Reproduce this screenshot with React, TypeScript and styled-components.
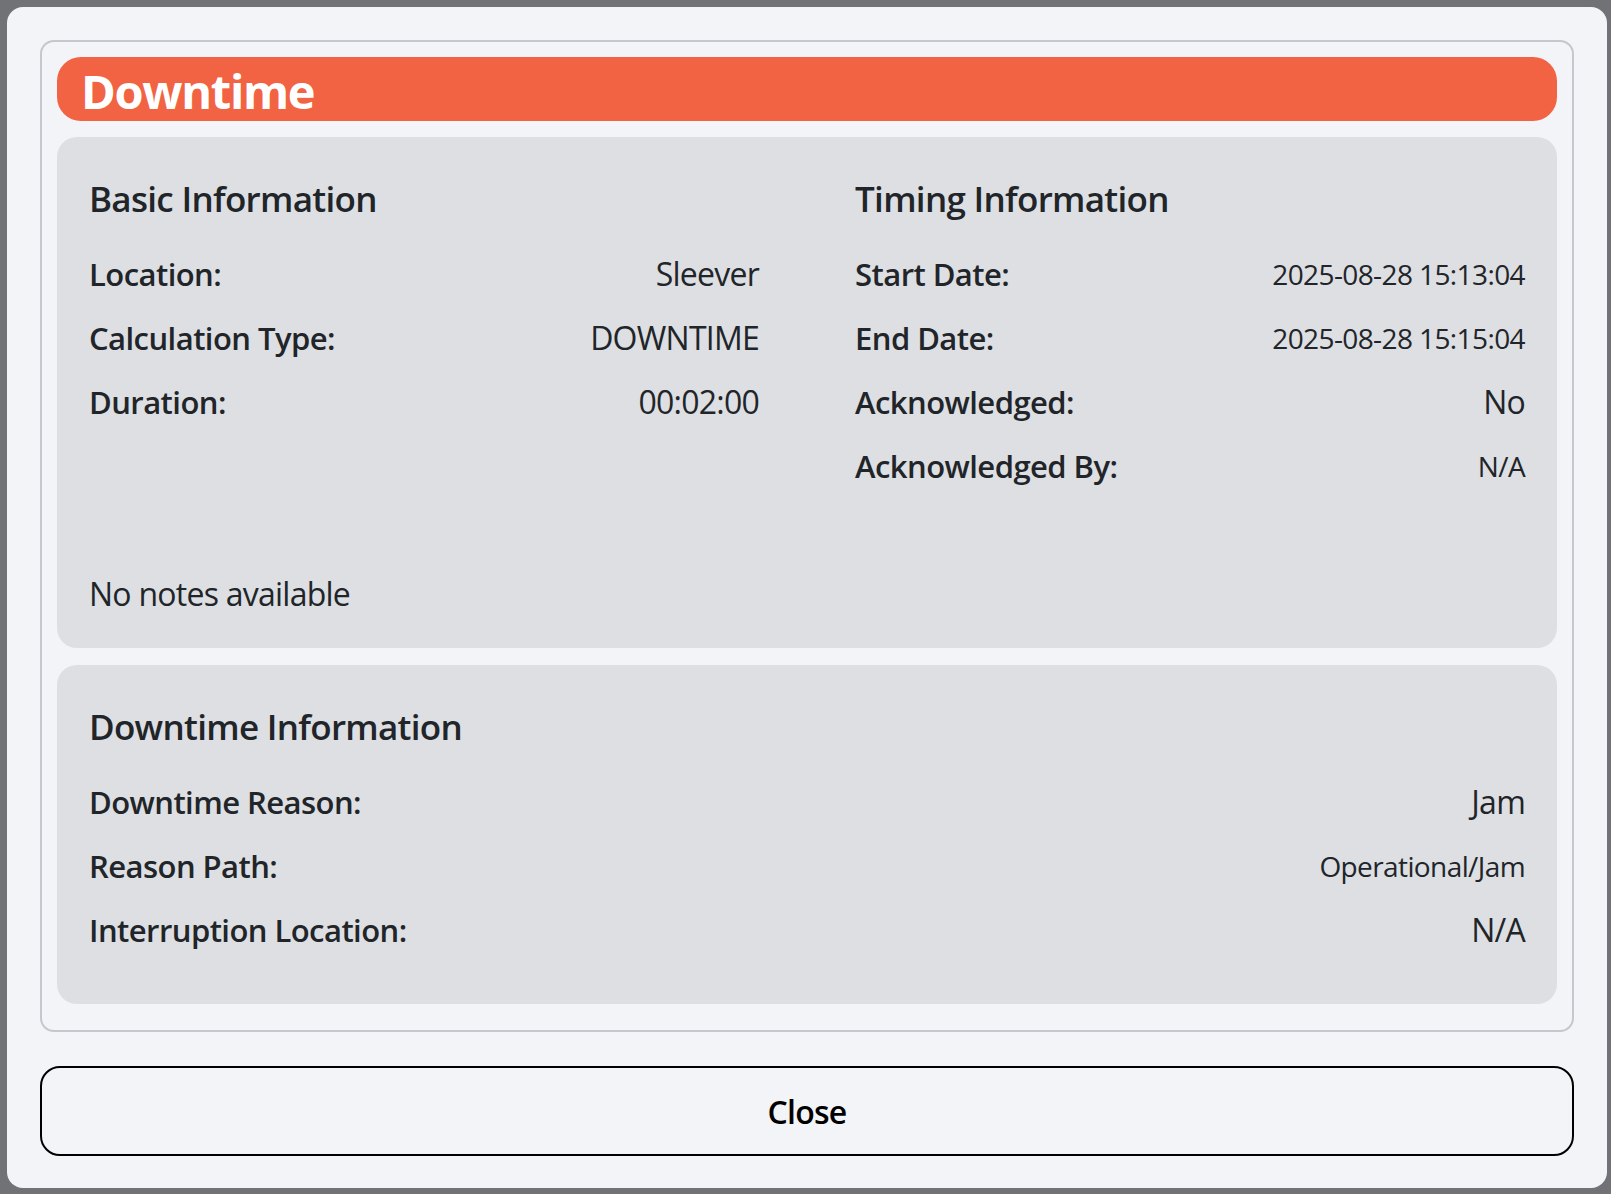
import React from "react";
import styled, { createGlobalStyle } from "styled-components";

const GlobalStyle = createGlobalStyle`
  html, body {
    margin: 0;
    padding: 0;
    background: #717276;
  }
  body {
    font-family: "Segoe UI", "Open Sans", "Noto Sans", sans-serif;
    color: #212529;
  }
  * { box-sizing: border-box; }
`;

const Overlay = styled.div`
  min-height: 1194px;
  padding: 7px 4px 6px 7px;
  background: #717276;
`;

const Modal = styled.div`
  width: 1600px;
  background: #f3f4f7;
  border-radius: 16px;
  padding: 33px 33px 32px;
  display: flex;
  flex-direction: column;
  gap: 34px;
`;

const Frame = styled.div`
  border: 2px solid #c3c8ce;
  border-radius: 14px;
  padding: 15px 15px 26px;
  display: flex;
  flex-direction: column;
  gap: 16px;
`;

const Banner = styled.div`
  height: 64px;
  background: #f16342;
  border-radius: 24px;
  padding: 4px 24px 0;
  display: flex;
  align-items: center;
`;

const BannerTitle = styled.h1`
  margin: 0;
  color: #ffffff;
  font-size: 47px;
  font-weight: 700;
  line-height: 60px;
  letter-spacing: -1.3px;
`;

const Card = styled.section<{ $gapBefore?: number }>`
  background: #dddfe3;
  border-radius: 20px;
  padding: 32px;
  margin-top: ${(p) => p.$gapBefore ?? 0}px;
`;

const Columns = styled.div`
  display: grid;
  grid-template-columns: 1fr 1fr;
  column-gap: 96px;
`;

const Column = styled.div`
  display: flex;
  flex-direction: column;
`;

const Heading = styled.h2`
  margin: 8px 0 29px;
  font-size: 35px;
  font-weight: 600;
  line-height: 44px;
  color: #212529;
  letter-spacing: -0.7px;
`;

const Rows = styled.div<{ $bottom?: number }>`
  display: flex;
  flex-direction: column;
  gap: 16px;
  margin-bottom: ${(p) => p.$bottom ?? 0}px;
`;

const Row = styled.div`
  display: flex;
  align-items: center;
  justify-content: space-between;
  height: 48px;
`;

const Label = styled.span`
  font-size: 31px;
  font-weight: 600;
  line-height: 48px;
  color: #212529;
  letter-spacing: -0.55px;
`;

const Value = styled.span<{ $small?: boolean }>`
  font-size: ${(p) => (p.$small ? 28 : 32)}px;
  font-weight: 400;
  line-height: 48px;
  color: #212529;
  text-align: right;
  letter-spacing: ${(p) => (p.$small ? -0.6 : -0.75)}px;
`;

const Notes = styled.p`
  margin: 82px 0 0;
  font-size: 32px;
  font-weight: 400;
  line-height: 44px;
  color: #212529;
  letter-spacing: -0.75px;
`;

const CloseButton = styled.button`
  height: 90px;
  width: 100%;
  border: 2px solid #000000;
  border-radius: 20px;
  background: transparent;
  font-family: "Segoe UI", "Open Sans", "Noto Sans", sans-serif;
  font-size: 32px;
  font-weight: 600;
  color: #000000;
  letter-spacing: -0.8px;
  cursor: pointer;
`;

type Item = { label: string; value: string; small?: boolean };

const basic: Item[] = [
  { label: "Location:", value: "Sleever" },
  { label: "Calculation Type:", value: "DOWNTIME" },
  { label: "Duration:", value: "00:02:00" },
];

const timing: Item[] = [
  { label: "Start Date:", value: "2025-08-28 15:13:04", small: true },
  { label: "End Date:", value: "2025-08-28 15:15:04", small: true },
  { label: "Acknowledged:", value: "No" },
  { label: "Acknowledged By:", value: "N/A", small: true },
];

const downtime: Item[] = [
  { label: "Downtime Reason:", value: "Jam" },
  { label: "Reason Path:", value: "Operational/Jam", small: true },
  { label: "Interruption Location:", value: "N/A" },
];

const RowList = ({ items, bottom }: { items: Item[]; bottom?: number }) => (
  <Rows $bottom={bottom}>
    {items.map((it) => (
      <Row key={it.label}>
        <Label>{it.label}</Label>
        <Value $small={it.small}>{it.value}</Value>
      </Row>
    ))}
  </Rows>
);

export default function App() {
  return (
    <>
      <GlobalStyle />
      <Overlay>
        <Modal>
          <Frame>
            <Banner>
              <BannerTitle>Downtime</BannerTitle>
            </Banner>
            <Card>
              <Columns>
                <Column>
                  <Heading>Basic Information</Heading>
                  <RowList items={basic} />
                </Column>
                <Column>
                  <Heading>Timing Information</Heading>
                  <RowList items={timing} />
                </Column>
              </Columns>
              <Notes>No notes available</Notes>
            </Card>
            <Card $gapBefore={1}>
              <Heading>Downtime Information</Heading>
              <RowList items={downtime} bottom={18} />
            </Card>
          </Frame>
          <CloseButton>Close</CloseButton>
        </Modal>
      </Overlay>
    </>
  );
}
